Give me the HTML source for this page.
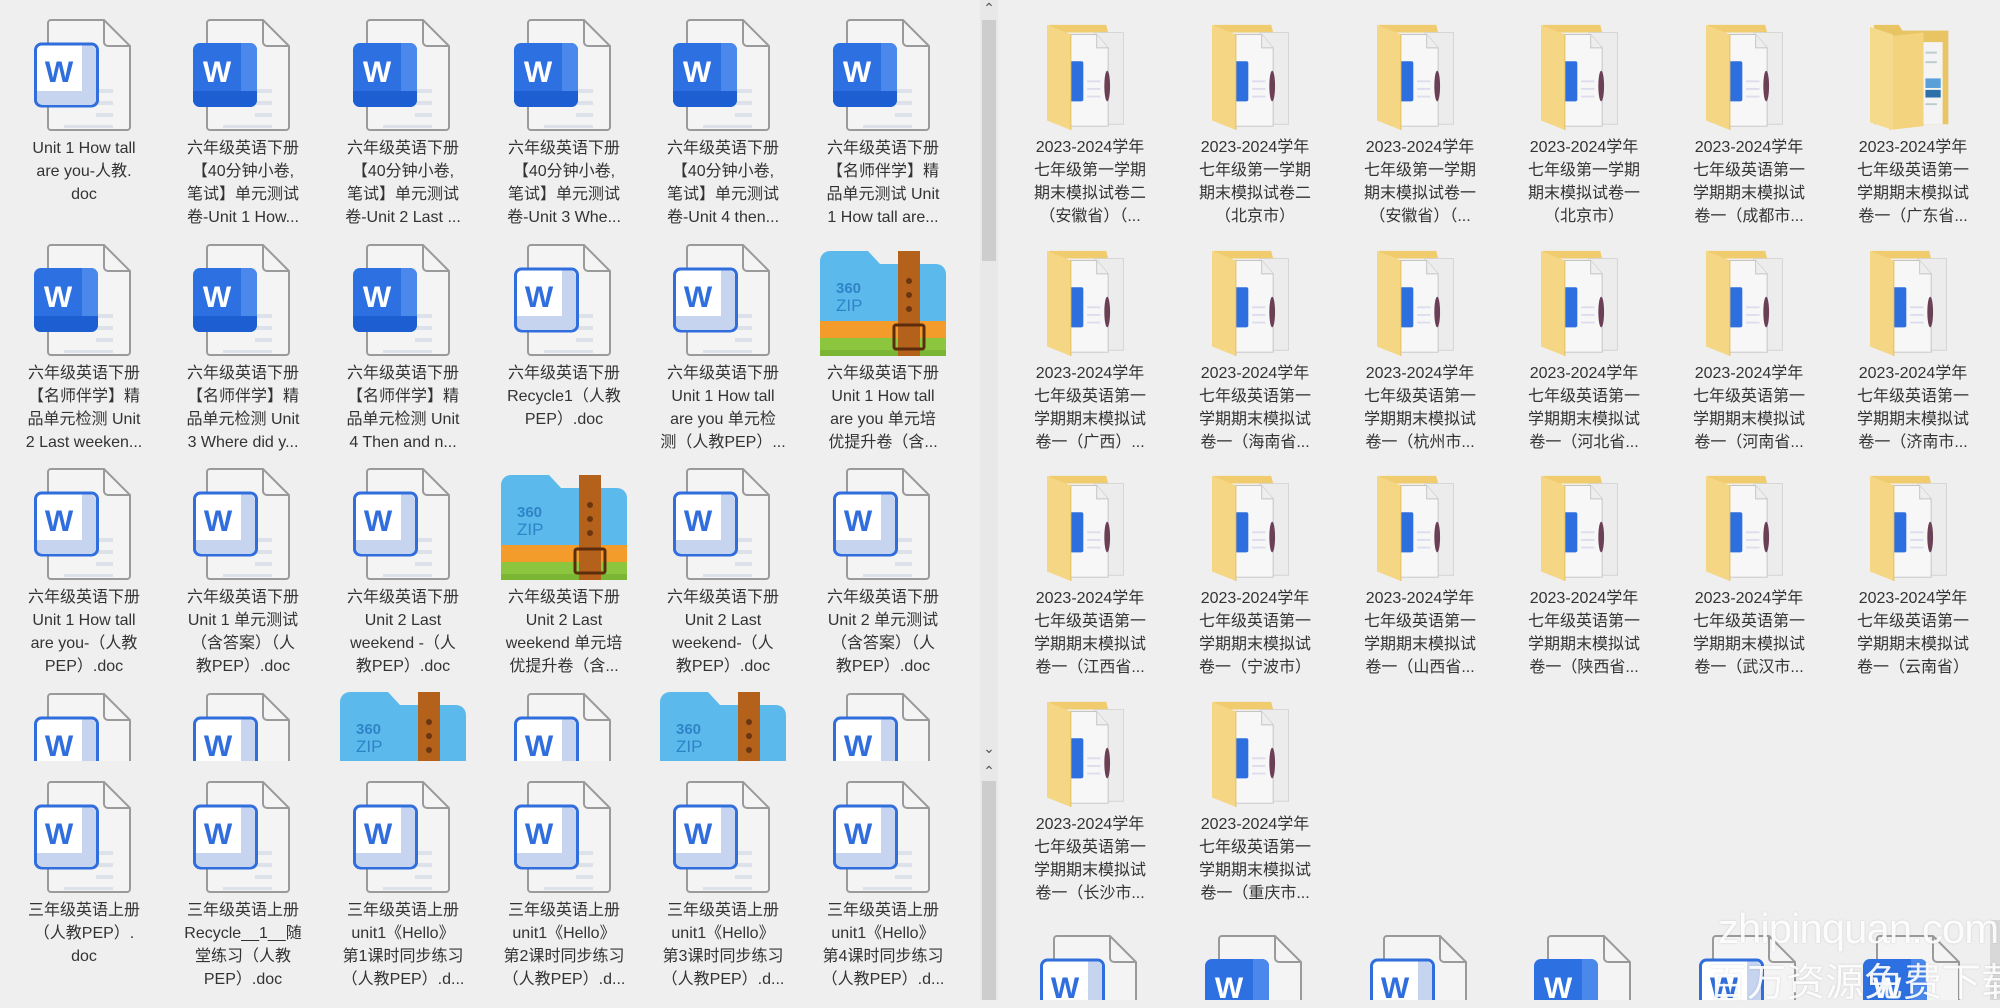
<!DOCTYPE html>
<html><head><meta charset="utf-8"><style>
body{margin:0;width:2000px;height:1000px;background:#efefef;overflow:hidden;position:relative;font-family:"Liberation Sans","Noto Sans CJK SC",sans-serif;}
.pane{position:absolute;overflow:hidden;}
.it{position:absolute;width:160px;}
.it svg{display:block;margin:0 auto;}
.t{margin-top:6px;text-align:center;font-size:16px;line-height:23px;color:#333;white-space:nowrap;}
.sb{position:absolute;background:#e8e8e8;}
.th{position:absolute;background:#cdcdcd;}
.ar{position:absolute;font-size:14px;color:#555;width:18px;text-align:center;}
.wm{position:absolute;color:rgba(255,255,255,0.92);font-family:"Liberation Sans","Noto Sans CJK SC",sans-serif;text-shadow:0 0 2px rgba(0,0,0,0.15);white-space:nowrap;}
</style></head><body>
<svg width="0" height="0" style="position:absolute">
<defs>
<symbol id="pg" viewBox="0 0 100 112">
<path d="M17 1h53l26 26v81a3 3 0 0 1-3 3H17a3 3 0 0 1-3-3V4a3 3 0 0 1 3-3z" fill="#f4f4f4" stroke="#9a9a9a" stroke-width="2"/>
<path d="M70 1v22a4 4 0 0 0 4 4h22" fill="none" stroke="#9a9a9a" stroke-width="2"/>
<rect x="62" y="70" width="17" height="4" fill="#dde2ea"/><rect x="62" y="82" width="17" height="4" fill="#dde2ea"/><rect x="62" y="94" width="17" height="4" fill="#dde2ea"/><rect x="30" y="106" width="49" height="3" fill="#dde2ea"/>
</symbol>
<symbol id="wl" viewBox="0 0 100 112">
<use href="#pg"/>
<rect x="1.5" y="25" width="62" height="62" rx="6" fill="#fff" stroke="#2f6edc" stroke-width="3"/>
<path d="M48 26.5h8a6 6 0 0 1 6 6V80a6 6 0 0 1-6 6h-8z" fill="#c6d4ef"/>
<path d="M3 72h59v8a6 6 0 0 1-6 6H9a6 6 0 0 1-6-6z" fill="#c6d4ef"/>
<text x="25" y="63" text-anchor="middle" font-family="Liberation Sans" font-weight="bold" font-size="30" fill="#2f6edc">W</text>
</symbol>
<symbol id="wd" viewBox="0 0 100 112">
<use href="#pg"/>
<rect x="0" y="24" width="64" height="64" rx="7" fill="#2d70e2"/>
<path d="M48 24h9a7 7 0 0 1 7 7v50a7 7 0 0 1-7 7h-9z" fill="#4b88ec"/>
<path d="M0 72h64v9a7 7 0 0 1-7 7H7a7 7 0 0 1-7-7z" fill="#1d5fd2"/>
<text x="24" y="63" text-anchor="middle" font-family="Liberation Sans" font-weight="bold" font-size="30" fill="#fff">W</text>
</symbol>
<symbol id="zp" viewBox="0 -7 126 112">
<path d="M0 10a10 10 0 0 1 10-10h38l12 13h56a10 10 0 0 1 10 10v82H0z" fill="#5cb9eb"/>
<rect x="0" y="70" width="126" height="17" fill="#f39b2b"/>
<rect x="0" y="87" width="126" height="18" fill="#8cc63f"/>
<path d="M0 99h126v6H0z" fill="#7ab534"/>
<rect x="78" y="0" width="22" height="105" fill="#b4611c"/>
<circle cx="89" cy="30" r="3" fill="#6b3510"/><circle cx="89" cy="44" r="3" fill="#6b3510"/><circle cx="89" cy="58" r="3" fill="#6b3510"/>
<rect x="74" y="74" width="30" height="24" rx="2" fill="none" stroke="#5b2d0c" stroke-width="3"/>
<text x="16" y="42" font-family="Liberation Sans" font-size="15" fill="#2f84c8" font-weight="bold">360</text>
<text x="16" y="60" font-family="Liberation Sans" font-size="17" fill="#2f84c8">ZIP</text>
</symbol>
<symbol id="fd" viewBox="0 0 90 112">
<path d="M2 2h60l2 8H2z" fill="#f0cc6e"/>
<path d="M50 10h30v96H50z" fill="#ececec" stroke="#d4d4d4"/>
<path d="M22 12h30l12 14v82H22z" fill="#f7f7f7" stroke="#c4c4c4"/>
<path d="M52 12v14h12" fill="#eee" stroke="#c4c4c4"/>
<rect x="24" y="40" width="14" height="42" rx="2" fill="#2e6fe0"/>
<rect x="42" y="60" width="14" height="2" fill="#dde"/><rect x="42" y="68" width="14" height="2" fill="#dde"/><rect x="42" y="76" width="14" height="2" fill="#dde"/>
<ellipse cx="63" cy="66" rx="3" ry="16" fill="#6b3f55"/>
<path d="M0 2l25 10v100L0 102z" fill="#f4d685"/>
<path d="M25 12v100" stroke="#e3bd5e" stroke-width="1"/>
</symbol>
<symbol id="fd2" viewBox="0 0 90 112">
<path d="M4 2h26l4 6h48v98H4z" fill="#e9c463"/>
<rect x="56" y="20" width="20" height="86" fill="#f4f4f4"/>
<rect x="58" y="58" width="16" height="10" fill="#5aa0d8"/><rect x="58" y="70" width="16" height="8" fill="#2d6fa8"/>
<rect x="58" y="30" width="12" height="2" fill="#bcc"/><rect x="58" y="40" width="12" height="2" fill="#bcc"/><rect x="58" y="84" width="12" height="2" fill="#bcc"/>
<path d="M20 14l36 -4v98l-36 4z" fill="#f3d37e"/>
<path d="M0 4l24 8v100L0 104z" fill="#f6da8c"/>
</symbol>
</defs></svg>

<!-- LEFT TOP PANE -->
<div class="pane" style="left:0;top:0;width:980px;height:761px;">
<div class="it" style="left:4px;top:19px"><svg width="100" height="112"><use href="#wl"/></svg><div class="t">Unit 1 How tall<br>are you-人教.<br>doc</div></div>
<div class="it" style="left:163px;top:19px"><svg width="100" height="112"><use href="#wd"/></svg><div class="t">六年级英语下册<br>【40分钟小卷,<br>笔试】单元测试<br>卷-Unit 1 How...</div></div>
<div class="it" style="left:323px;top:19px"><svg width="100" height="112"><use href="#wd"/></svg><div class="t">六年级英语下册<br>【40分钟小卷,<br>笔试】单元测试<br>卷-Unit 2 Last ...</div></div>
<div class="it" style="left:484px;top:19px"><svg width="100" height="112"><use href="#wd"/></svg><div class="t">六年级英语下册<br>【40分钟小卷,<br>笔试】单元测试<br>卷-Unit 3 Whe...</div></div>
<div class="it" style="left:643px;top:19px"><svg width="100" height="112"><use href="#wd"/></svg><div class="t">六年级英语下册<br>【40分钟小卷,<br>笔试】单元测试<br>卷-Unit 4 then...</div></div>
<div class="it" style="left:803px;top:19px"><svg width="100" height="112"><use href="#wd"/></svg><div class="t">六年级英语下册<br>【名师伴学】精<br>品单元测试 Unit<br>1 How tall are...</div></div>

<div class="it" style="left:4px;top:244px"><svg width="100" height="112"><use href="#wd"/></svg><div class="t">六年级英语下册<br>【名师伴学】精<br>品单元检测 Unit<br>2 Last weeken...</div></div>
<div class="it" style="left:163px;top:244px"><svg width="100" height="112"><use href="#wd"/></svg><div class="t">六年级英语下册<br>【名师伴学】精<br>品单元检测 Unit<br>3 Where did y...</div></div>
<div class="it" style="left:323px;top:244px"><svg width="100" height="112"><use href="#wd"/></svg><div class="t">六年级英语下册<br>【名师伴学】精<br>品单元检测 Unit<br>4 Then and n...</div></div>
<div class="it" style="left:484px;top:244px"><svg width="100" height="112"><use href="#wl"/></svg><div class="t">六年级英语下册<br>Recycle1（人教<br>PEP）.doc</div></div>
<div class="it" style="left:643px;top:244px"><svg width="100" height="112"><use href="#wl"/></svg><div class="t">六年级英语下册<br>Unit 1 How tall<br>are you 单元检<br>测（人教PEP）...</div></div>
<div class="it" style="left:803px;top:244px"><svg width="126" height="112"><use href="#zp"/></svg><div class="t">六年级英语下册<br>Unit 1 How tall<br>are you 单元培<br>优提升卷（含...</div></div>

<div class="it" style="left:4px;top:468px"><svg width="100" height="112"><use href="#wl"/></svg><div class="t">六年级英语下册<br>Unit 1 How tall<br>are you-（人教<br>PEP）.doc</div></div>
<div class="it" style="left:163px;top:468px"><svg width="100" height="112"><use href="#wl"/></svg><div class="t">六年级英语下册<br>Unit 1 单元测试<br>（含答案）（人<br>教PEP）.doc</div></div>
<div class="it" style="left:323px;top:468px"><svg width="100" height="112"><use href="#wl"/></svg><div class="t">六年级英语下册<br>Unit 2 Last<br>weekend -（人<br>教PEP）.doc</div></div>
<div class="it" style="left:484px;top:468px"><svg width="126" height="112"><use href="#zp"/></svg><div class="t">六年级英语下册<br>Unit 2 Last<br>weekend 单元培<br>优提升卷（含...</div></div>
<div class="it" style="left:643px;top:468px"><svg width="100" height="112"><use href="#wl"/></svg><div class="t">六年级英语下册<br>Unit 2 Last<br>weekend-（人<br>教PEP）.doc</div></div>
<div class="it" style="left:803px;top:468px"><svg width="100" height="112"><use href="#wl"/></svg><div class="t">六年级英语下册<br>Unit 2 单元测试<br>（含答案）（人<br>教PEP）.doc</div></div>

<div class="it" style="left:4px;top:693px"><svg width="100" height="112"><use href="#wl"/></svg></div>
<div class="it" style="left:163px;top:693px"><svg width="100" height="112"><use href="#wl"/></svg></div>
<div class="it" style="left:323px;top:685px"><svg width="126" height="112"><use href="#zp"/></svg></div>
<div class="it" style="left:484px;top:693px"><svg width="100" height="112"><use href="#wl"/></svg></div>
<div class="it" style="left:643px;top:685px"><svg width="126" height="112"><use href="#zp"/></svg></div>
<div class="it" style="left:803px;top:693px"><svg width="100" height="112"><use href="#wl"/></svg></div>
</div>

<!-- LEFT BOTTOM PANE -->
<div class="pane" style="left:0;top:761px;width:980px;height:239px;">
<div class="it" style="left:4px;top:20px"><svg width="100" height="112"><use href="#wl"/></svg><div class="t">三年级英语上册<br>（人教PEP）.<br>doc</div></div>
<div class="it" style="left:163px;top:20px"><svg width="100" height="112"><use href="#wl"/></svg><div class="t">三年级英语上册<br>Recycle__1__随<br>堂练习（人教<br>PEP）.doc</div></div>
<div class="it" style="left:323px;top:20px"><svg width="100" height="112"><use href="#wl"/></svg><div class="t">三年级英语上册<br>unit1《Hello》<br>第1课时同步练习<br>（人教PEP）.d...</div></div>
<div class="it" style="left:484px;top:20px"><svg width="100" height="112"><use href="#wl"/></svg><div class="t">三年级英语上册<br>unit1《Hello》<br>第2课时同步练习<br>（人教PEP）.d...</div></div>
<div class="it" style="left:643px;top:20px"><svg width="100" height="112"><use href="#wl"/></svg><div class="t">三年级英语上册<br>unit1《Hello》<br>第3课时同步练习<br>（人教PEP）.d...</div></div>
<div class="it" style="left:803px;top:20px"><svg width="100" height="112"><use href="#wl"/></svg><div class="t">三年级英语上册<br>unit1《Hello》<br>第4课时同步练习<br>（人教PEP）.d...</div></div>
</div>

<!-- scrollbars -->
<div class="sb" style="left:980px;top:0;width:18px;height:761px;"></div>
<div class="th" style="left:982px;top:20px;width:14px;height:241px;"></div>
<div class="ar" style="left:980px;top:0">&#8963;</div>
<div class="ar" style="left:980px;top:740px">&#8964;</div>
<div class="sb" style="left:980px;top:761px;width:18px;height:239px;"></div>
<div class="ar" style="left:980px;top:763px">&#8963;</div>
<div class="th" style="left:982px;top:781px;width:14px;height:219px;"></div>

<!-- RIGHT PANE -->
<div class="pane" style="left:998px;top:0;width:1002px;height:1000px;">
<div class="it" style="left:12px;top:23px"><svg width="88" height="107"><use href="#fd"/></svg><div class="t">2023-2024学年<br>七年级第一学期<br>期末模拟试卷二<br>（安徽省）（...</div></div>
<div class="it" style="left:177px;top:23px"><svg width="88" height="107"><use href="#fd"/></svg><div class="t">2023-2024学年<br>七年级第一学期<br>期末模拟试卷二<br>（北京市）</div></div>
<div class="it" style="left:342px;top:23px"><svg width="88" height="107"><use href="#fd"/></svg><div class="t">2023-2024学年<br>七年级第一学期<br>期末模拟试卷一<br>（安徽省）（...</div></div>
<div class="it" style="left:506px;top:23px"><svg width="88" height="107"><use href="#fd"/></svg><div class="t">2023-2024学年<br>七年级第一学期<br>期末模拟试卷一<br>（北京市）</div></div>
<div class="it" style="left:671px;top:23px"><svg width="88" height="107"><use href="#fd"/></svg><div class="t">2023-2024学年<br>七年级英语第一<br>学期期末模拟试<br>卷一（成都市...</div></div>
<div class="it" style="left:835px;top:23px"><svg width="88" height="107"><use href="#fd2"/></svg><div class="t">2023-2024学年<br>七年级英语第一<br>学期期末模拟试<br>卷一（广东省...</div></div>

<div class="it" style="left:12px;top:249px"><svg width="88" height="107"><use href="#fd"/></svg><div class="t">2023-2024学年<br>七年级英语第一<br>学期期末模拟试<br>卷一（广西）...</div></div>
<div class="it" style="left:177px;top:249px"><svg width="88" height="107"><use href="#fd"/></svg><div class="t">2023-2024学年<br>七年级英语第一<br>学期期末模拟试<br>卷一（海南省...</div></div>
<div class="it" style="left:342px;top:249px"><svg width="88" height="107"><use href="#fd"/></svg><div class="t">2023-2024学年<br>七年级英语第一<br>学期期末模拟试<br>卷一（杭州市...</div></div>
<div class="it" style="left:506px;top:249px"><svg width="88" height="107"><use href="#fd"/></svg><div class="t">2023-2024学年<br>七年级英语第一<br>学期期末模拟试<br>卷一（河北省...</div></div>
<div class="it" style="left:671px;top:249px"><svg width="88" height="107"><use href="#fd"/></svg><div class="t">2023-2024学年<br>七年级英语第一<br>学期期末模拟试<br>卷一（河南省...</div></div>
<div class="it" style="left:835px;top:249px"><svg width="88" height="107"><use href="#fd"/></svg><div class="t">2023-2024学年<br>七年级英语第一<br>学期期末模拟试<br>卷一（济南市...</div></div>

<div class="it" style="left:12px;top:474px"><svg width="88" height="107"><use href="#fd"/></svg><div class="t">2023-2024学年<br>七年级英语第一<br>学期期末模拟试<br>卷一（江西省...</div></div>
<div class="it" style="left:177px;top:474px"><svg width="88" height="107"><use href="#fd"/></svg><div class="t">2023-2024学年<br>七年级英语第一<br>学期期末模拟试<br>卷一（宁波市）</div></div>
<div class="it" style="left:342px;top:474px"><svg width="88" height="107"><use href="#fd"/></svg><div class="t">2023-2024学年<br>七年级英语第一<br>学期期末模拟试<br>卷一（山西省...</div></div>
<div class="it" style="left:506px;top:474px"><svg width="88" height="107"><use href="#fd"/></svg><div class="t">2023-2024学年<br>七年级英语第一<br>学期期末模拟试<br>卷一（陕西省...</div></div>
<div class="it" style="left:671px;top:474px"><svg width="88" height="107"><use href="#fd"/></svg><div class="t">2023-2024学年<br>七年级英语第一<br>学期期末模拟试<br>卷一（武汉市...</div></div>
<div class="it" style="left:835px;top:474px"><svg width="88" height="107"><use href="#fd"/></svg><div class="t">2023-2024学年<br>七年级英语第一<br>学期期末模拟试<br>卷一（云南省）</div></div>

<div class="it" style="left:12px;top:700px"><svg width="88" height="107"><use href="#fd"/></svg><div class="t">2023-2024学年<br>七年级英语第一<br>学期期末模拟试<br>卷一（长沙市...</div></div>
<div class="it" style="left:177px;top:700px"><svg width="88" height="107"><use href="#fd"/></svg><div class="t">2023-2024学年<br>七年级英语第一<br>学期期末模拟试<br>卷一（重庆市...</div></div>

<div class="it" style="left:12px;top:935px"><svg width="100" height="112"><use href="#wl"/></svg></div>
<div class="it" style="left:177px;top:935px"><svg width="100" height="112"><use href="#wd"/></svg></div>
<div class="it" style="left:342px;top:935px"><svg width="100" height="112"><use href="#wl"/></svg></div>
<div class="it" style="left:506px;top:935px"><svg width="100" height="112"><use href="#wd"/></svg></div>
<div class="it" style="left:671px;top:935px"><svg width="100" height="112"><use href="#wl"/></svg></div>
<div class="it" style="left:835px;top:935px"><svg width="100" height="112"><use href="#wd"/></svg></div>
</div>
<div class="sb" style="left:1990px;top:920px;width:10px;height:80px;background:#d8d8d8"></div>

<div class="wm" style="left:1718px;top:905px;font-size:42px;letter-spacing:-1px;">zhipinquan.com</div>
<div class="wm" style="left:1708px;top:952px;font-size:39px;">百万资源免费下载</div>
</body></html>
